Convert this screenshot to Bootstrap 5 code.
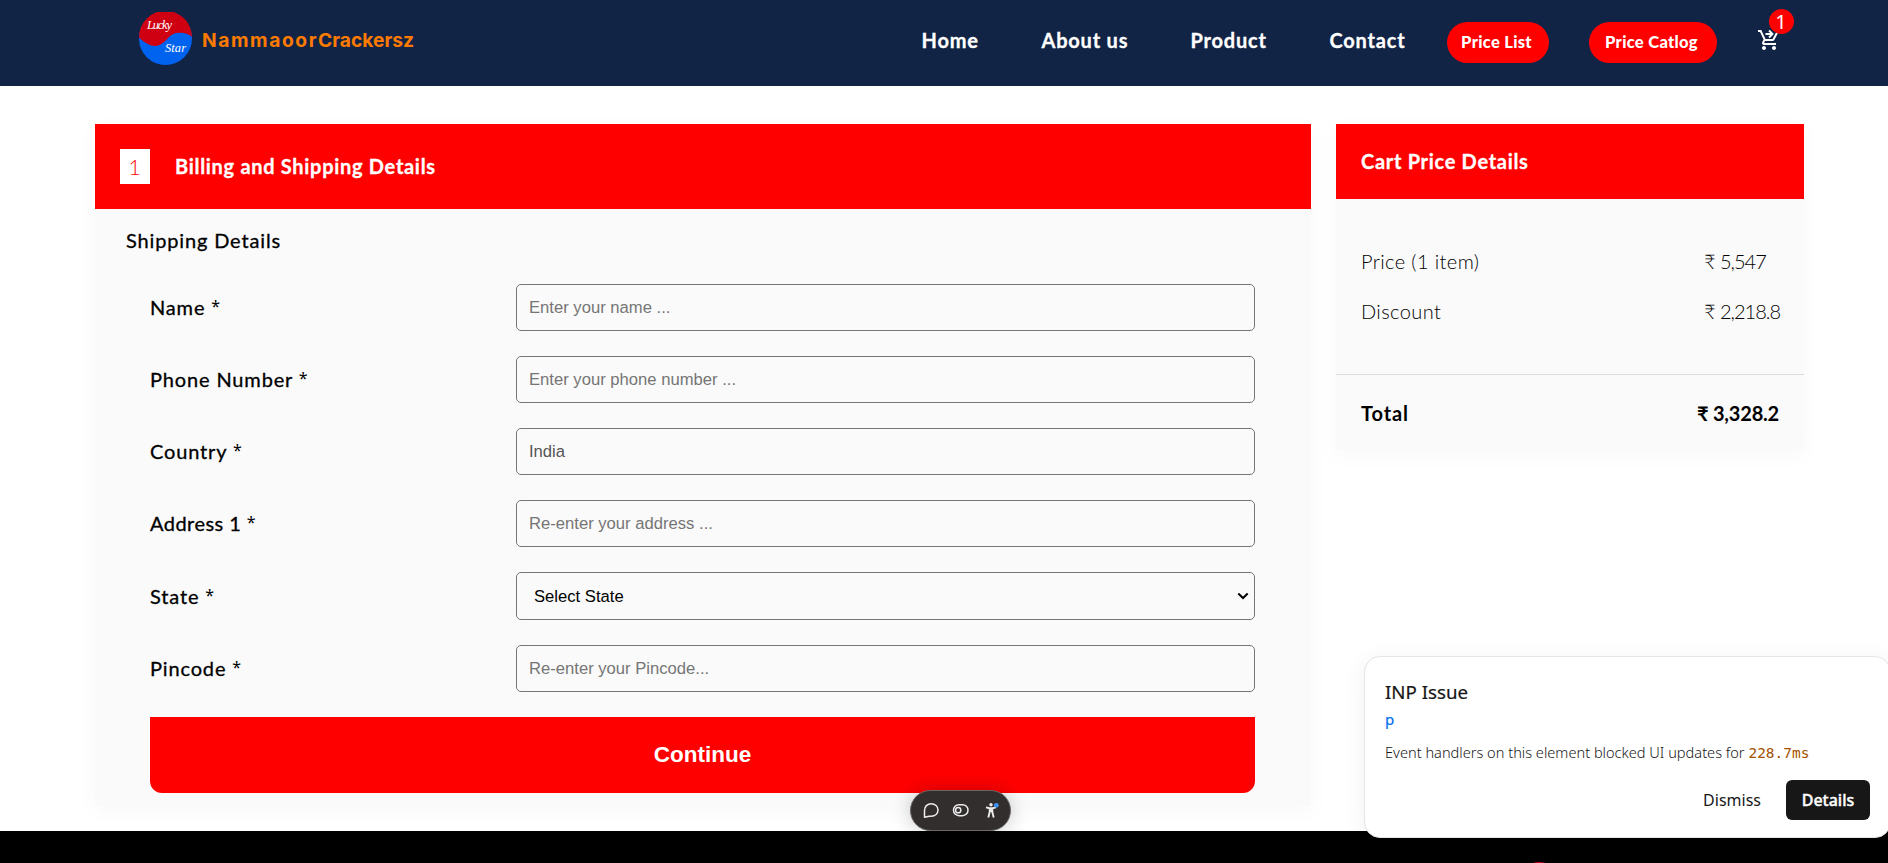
<!DOCTYPE html>
<html lang="en">
<head>
<meta charset="utf-8">
<meta name="viewport" content="width=device-width, initial-scale=1">
<title>Nammaoor Crackersz - Checkout</title>
<link rel="stylesheet" href="https://cdn.jsdelivr.net/npm/bootstrap@5.3.0/dist/css/bootstrap.min.css">
<style>
html,body{height:863px;overflow:hidden}
body{font-family:Lato,"Noto Sans",sans-serif;font-size:20px;line-height:25px;color:#000;background:#fff}
.site-head{height:86px;background:#112446;padding-left:139px}
.logo{margin-top:-9px}
.brand{font-family:Inter,sans-serif;font-weight:700;font-size:19.2px;color:#ff7b00;line-height:24px;margin:-6px 0 0 10px;width:214px}
.brand .b1{letter-spacing:1.6px}
.menu{font-weight:700;margin:-5px 0 0 505.500px;letter-spacing:.8px;-webkit-text-stroke:.3px #fff}
.menu a{color:#fff;text-decoration:none;white-space:nowrap}
.w1{width:120px}.w2{width:149px}.w3{width:139px}.w4{width:117px}
.pill{background:red;color:#fff;font-weight:900;font-size:16.500px;letter-spacing:.3px;height:41px;border-radius:21px;padding:0 2px 0 0;white-space:nowrap;border:0;margin-bottom:1px}
.pill.p1{width:102px}
.pill.p2{width:128px;margin-left:40px}
.cart{margin:-7px 0 0 40px}
.cart-count{position:absolute;left:12px;top:-19px;width:25px;height:25px;background:red;border-radius:50%;color:#fff;font:20px/25px "Noto Sans",sans-serif;text-align:center}
.page-main{margin:38px 84px 0 95px;height:707px}
.panel{background:#fafafa;box-shadow:0 5px 22px rgba(0,0,0,.03)}
.bill{width:1216px;height:682px}
.bar{background:red;color:#fff;font-weight:700;letter-spacing:.7px;-webkit-text-stroke:.3px #fff}
.bill .bar{height:85px;padding-left:25px;gap:25px}
.step{width:30px;height:35px;background:#fff;color:red;font-weight:300;font-size:21px;-webkit-text-stroke:0}
.summary{width:468px;height:326px}
.summary .bar{height:75px;padding-left:25px}
.sub{letter-spacing:.85px;margin:19px 0 0 31px;-webkit-text-stroke:.3px #000}
.fields{padding:0 56px 0 55px;margin-top:31px;display:grid;row-gap:25px}
.field{display:grid;grid-template-columns:366px 739px;height:47px;align-items:center}
.field label{-webkit-text-stroke:.3px #000;white-space:nowrap;letter-spacing:.85px}
.field label i{font:16px/16px "Noto Sans",sans-serif;-webkit-text-stroke:0;vertical-align:3px}
.field label.tight{letter-spacing:.45px}
.field .form-control,.field .form-select{height:100%;border:1px solid #767676;border-radius:5px;background-color:#fafafa;font:16.640px "Liberation Sans",Arial,sans-serif;padding:0 12px;color:#545454}
.field .form-control::placeholder{color:#757575;opacity:1}
.field.pick{height:48px}
.field .form-select{color:#000;padding-left:17px;background-image:url("data:image/svg+xml,%3Csvg xmlns='http://www.w3.org/2000/svg' viewBox='0 0 12 8'%3E%3Cpath d='M1.3 1.5 6 6l4.7-4.5' fill='none' stroke='%23000' stroke-width='2'/%3E%3C/svg%3E");background-size:12px 8px;background-position:right 5px center}
.go{height:76px;background:red;color:#fff;font:700 22.500px "Liberation Sans",Arial,sans-serif;border:0;border-radius:0 0 12px 12px}
.lines{height:175px;padding:50px 25px 0}
.line{font-weight:300;letter-spacing:.4px}
.line+.line{margin-top:25px}
.line .val{width:75px;white-space:nowrap;letter-spacing:-1px;word-spacing:1px}
.total{font-weight:700;border-top:1px solid #dcdcdc;padding:26px 25px;letter-spacing:.9px}
.total .sum{letter-spacing:-.2px}
.foot{height:32px;background:#000;overflow:hidden}
.foot .dot{width:40px;height:40px;border-radius:50%;background:#d0021b;margin:31px 0 0 1519px}
.inp{position:absolute;left:1364px;top:656px;width:527px;height:182px;background:#fff;border:1px solid #e5e5e5;border-radius:16px;box-shadow:0 4px 24px rgba(0,0,0,.06);font-family:"Noto Sans",sans-serif;color:#171717;padding:0 20px}
.inp .ttl{font-size:18.700px;line-height:26px;margin-top:22px;white-space:nowrap;-webkit-text-stroke:.2px #171717}
.inp .tag{font-size:15px;line-height:20px;color:#0070f3;margin-top:4px;-webkit-text-stroke:.2px #0070f3}
.inp .msg{font-size:14.580px;line-height:22px;margin-top:12px;white-space:nowrap;font-weight:300}
.inp code{font-family:"DejaVu Sans Mono",monospace;color:#a35200;font-size:14.500px;font-weight:400}
.inp .acts{margin-top:16px;gap:25px;font-size:16px}
.inp .det{background:#171717;color:#fff;border-radius:6px;width:84px;height:40px;font-size:16px;font-weight:500;padding:0;border:0;-webkit-text-stroke:.4px #fff}
.tools{position:absolute;left:910px;top:790px;width:101px;height:41px;border-radius:21px;background:#332e2e;border:1px solid #6b6767;box-shadow:0 0 20px rgba(0,0,0,.22)}
.tools svg{display:block;margin:-1px}
</style>
</head>
<body class="position-relative">
<header class="site-head d-flex align-items-center">
  <svg class="logo flex-shrink-0" width="53" height="53" viewBox="0 0 53 53"><circle cx="26.5" cy="26.5" r="26.5" fill="#0063f0"/><path d="M0 25.500C6 31 11 34 16 34C28 33 28 21 40 20.700C46 20.700 50 22 53 25A26.500 26.500 0 0 0 0 25.500Z" fill="#cf0012"/><g font-family="Liberation Serif" font-style="italic" font-size="12.5" fill="#fff"><text x="8" y="17.300" textLength="25">Lucky</text><text x="26" y="39.500" textLength="21">Star</text></g></svg>
  <div class="brand d-flex"><span class="b1">Nammaoor</span><span class="b2">Crackersz</span></div>
  <nav class="menu d-flex"><a class="w1">Home</a><a class="w2">About us</a><a class="w3">Product</a><a class="w4">Contact</a></nav>
  <button class="pill p1">Price List</button>
  <button class="pill p2">Price Catlog</button>
  <div class="cart position-relative"><svg class="d-block" width="24" height="24" viewBox="0 0 24 24" fill="#fff"><path d="M7 18c-1.100 0-2 .9-2 2s.9 2 2 2 2-.9 2-2-.9-2-2-2zM17 18c-1.100 0-2 .9-2 2s.9 2 2 2 2-.9 2-2-.9-2-2-2zM1 2v2h2l3.600 7.590-1.350 2.440C4.520 15.370 5.480 17 7 17h12v-2H7l1.100-2h7.450c.75 0 1.410-.41 1.750-1.030L21 4.960 19.250 4l-3.700 7H8.530L4.270 2H1z"/><path d="M8.500 6H15M12 2.500 15.500 6 12 9.500" fill="none" stroke="#fff" stroke-width="1.900"/></svg><span class="cart-count">1</span></div>
</header>
<main class="page-main d-flex align-items-start justify-content-between">
  <section class="panel bill">
    <div class="bar d-flex align-items-center"><span class="step d-flex align-items-center justify-content-center">1</span><span>Billing and Shipping Details</span></div>
    <div class="sub">Shipping Details</div>
    <form class="fields">
      <div class="field"><label>Name <i>*</i></label><input class="form-control" placeholder="Enter your name ..."></div>
      <div class="field"><label>Phone Number <i>*</i></label><input class="form-control" placeholder="Enter your phone number ..."></div>
      <div class="field"><label>Country <i>*</i></label><input class="form-control" value="India"></div>
      <div class="field"><label class="tight">Address 1 <i>*</i></label><input class="form-control" placeholder="Re-enter your address ..."></div>
      <div class="field pick"><label>State <i>*</i></label><select class="form-select"><option>Select State</option></select></div>
      <div class="field"><label>Pincode <i>*</i></label><input class="form-control" placeholder="Re-enter your Pincode..."></div>
      <button type="button" class="go">Continue</button>
    </form>
  </section>
  <aside class="panel summary">
    <div class="bar d-flex align-items-center">Cart Price Details</div>
    <div class="lines">
      <div class="line d-flex justify-content-between"><span>Price (1 item)</span><span class="val">₹ 5,547</span></div>
      <div class="line d-flex justify-content-between"><span>Discount</span><span class="val">₹ 2,218.8</span></div>
    </div>
    <div class="total d-flex justify-content-between"><span>Total</span><span class="sum">₹ 3,328.2</span></div>
  </aside>
</main>
<footer class="foot"><div class="dot"></div></footer>
<div class="tools"><svg width="101" height="41" viewBox="0 0 101 41" fill="none" stroke="#ececec" stroke-width="1.500"><path d="M14.500 27.200V20.500C14.500 16.500 17.400 13.800 21.200 13.800S28 16.400 28 20.100 25.100 26.200 21.200 26.200H19.200Z" stroke-linejoin="round"/><rect x="43.500" y="14.700" width="14.500" height="11" rx="5.500"/><circle cx="48.200" cy="20.200" r="2.600"/><path d="M76 17.400 79.500 18.200H82.500L86 17.400M81 18v4M79.700 18.500V22L78.300 27.500M82.300 18.500V22L83.700 27.500" stroke-width="1.900"/><circle cx="81" cy="14.700" r="1.700" fill="#ececec" stroke="none"/><circle cx="86.300" cy="15.300" r="2.400" fill="#3b93f7" stroke="none"/></svg></div>
<div class="inp"><div class="ttl">INP Issue</div><div class="tag">p</div><div class="msg">Event handlers on this element blocked UI updates for <code>228.7ms</code></div>
<div class="acts d-flex justify-content-end align-items-center"><span>Dismiss</span><button class="det">Details</button></div></div>
<script src="https://cdn.jsdelivr.net/npm/bootstrap@5.3.0/dist/js/bootstrap.bundle.min.js"></script>
</body>
</html>
